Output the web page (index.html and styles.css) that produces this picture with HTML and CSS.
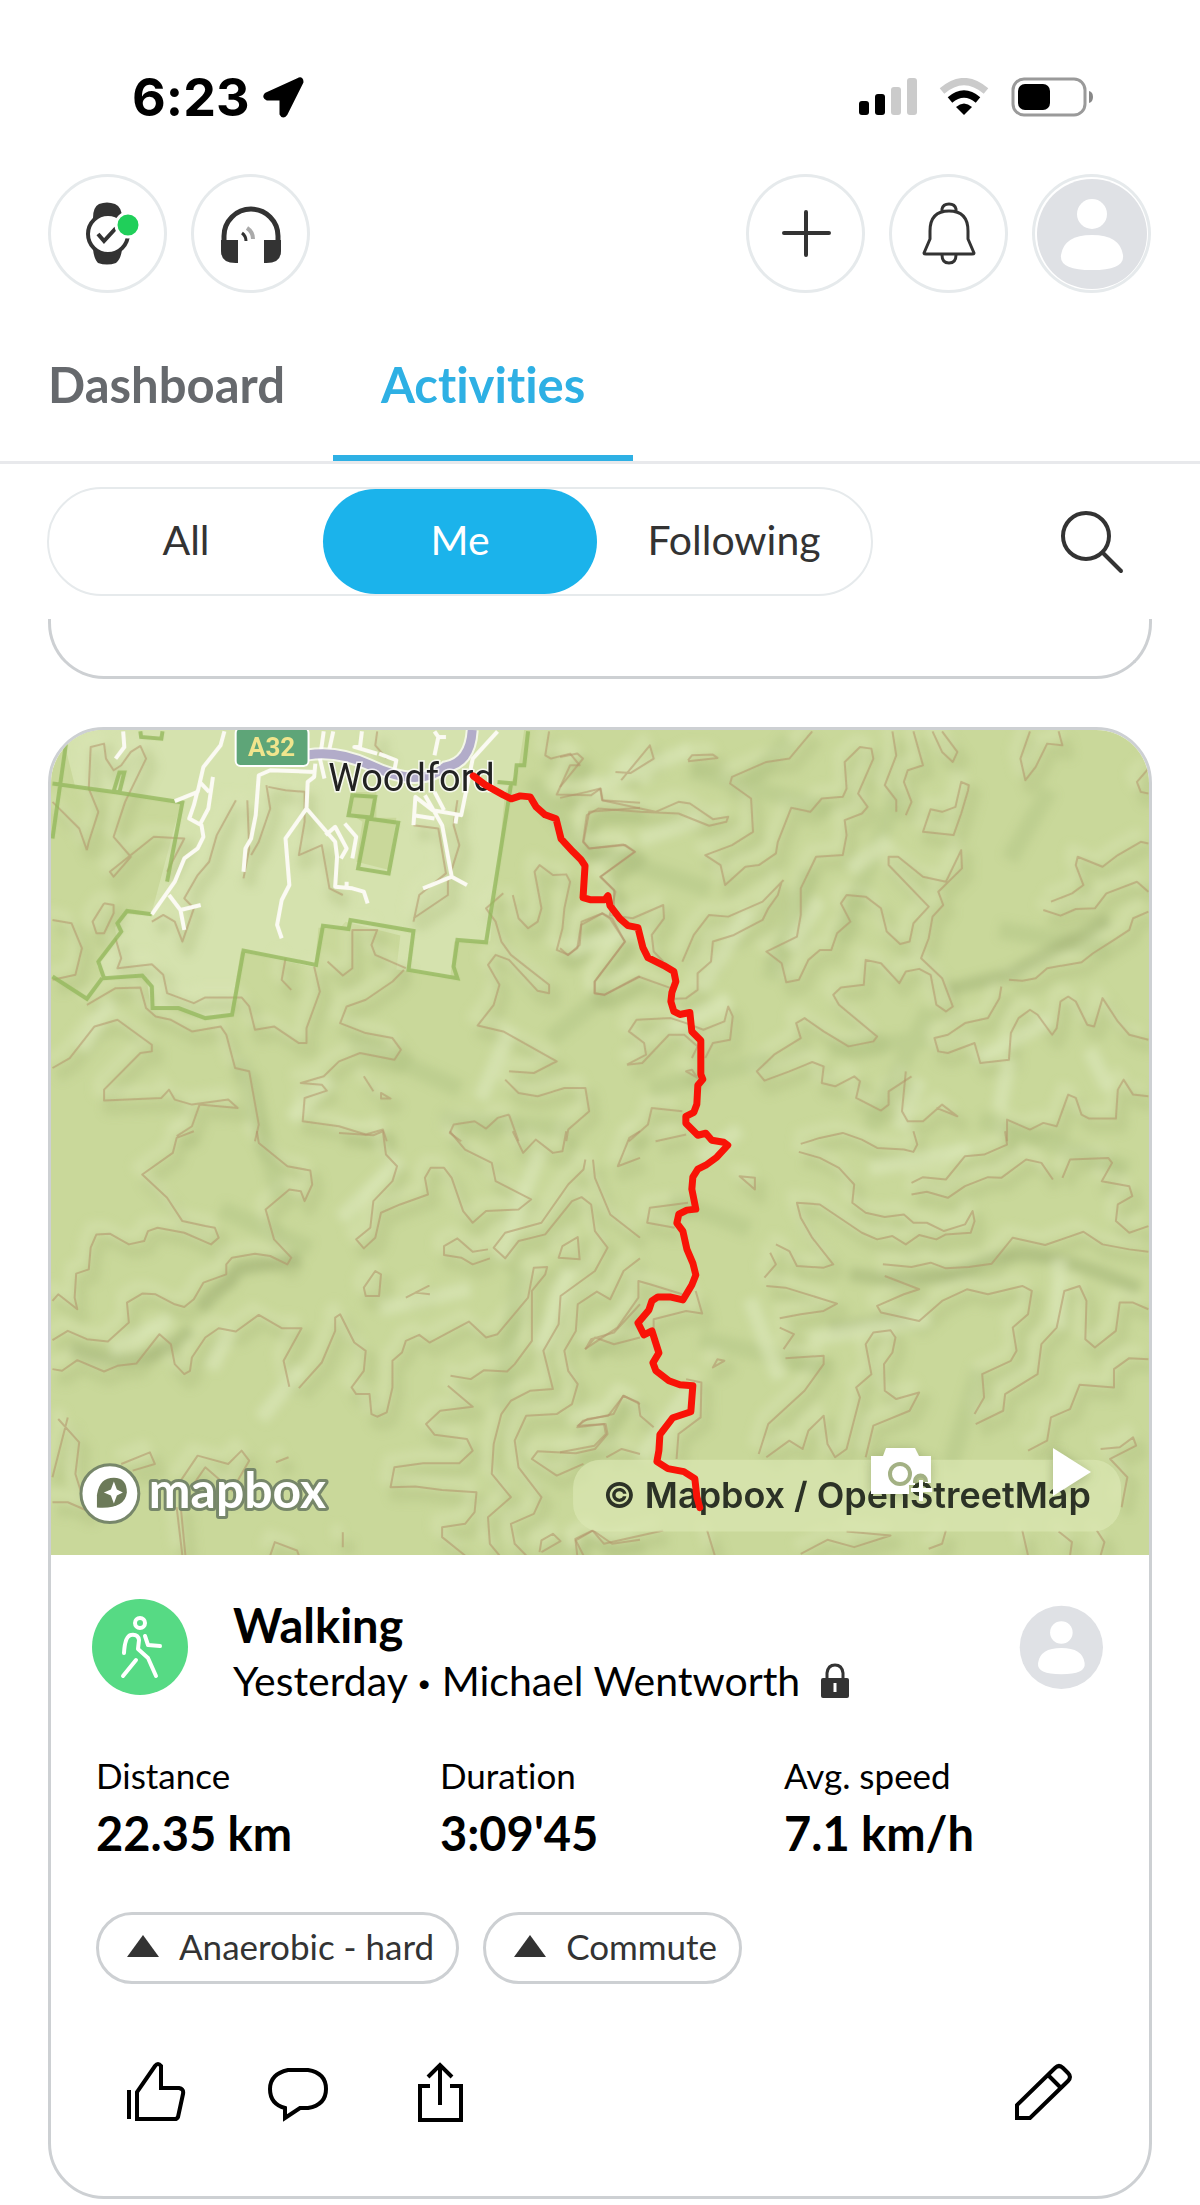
FILE: index.html
```html
<!DOCTYPE html>
<html lang="en">
<head>
  <meta charset="UTF-8">
  <meta name="viewport" content="width=device-width, initial-scale=1.0">
  <title>Activities</title>
  <link rel="stylesheet" href="styles.css">
</head>
<body>
  <div class="status-bar">
    <div class="status-time">
      <span>6:23</span>
      <svg width="44" height="44" viewBox="0 0 44 44"><path d="M38 4 5 19q-3 3 1 5h14v15q2 4 5 0L41 7q0-4-3-3z" stroke="#000" stroke-width="3" stroke-linejoin="round"/></svg>
    </div>
    <div class="status-icons">
      <svg width="58" height="38" viewBox="0 0 58 38">
        <rect x="0" y="23" width="10" height="14" rx="3"/><rect x="16" y="16" width="10" height="21" rx="3"/>
        <g fill="#cbcbcb"><rect x="32" y="9" width="10" height="28" rx="3"/><rect x="48" y="0" width="10" height="37" rx="3"/></g>
      </svg>
      <svg width="50" height="38" viewBox="0 0 50 38">
        <path d="M3 13q22-19 44 0" fill="none" stroke="#cbcbcb" stroke-width="7"/>
        <path d="M11 22q14-12 28 0" fill="none" stroke="#000" stroke-width="7"/>
        <path d="M17 29q8-7 16 0l-8 8z"/>
      </svg>
      <svg width="84" height="40" viewBox="0 0 84 40">
        <rect x="2" y="2" width="72" height="36" rx="11" fill="none" stroke="#9a9a9a" stroke-width="3"/>
        <rect x="7" y="7" width="32" height="26" rx="7"/><path d="M78 14q4 1 4 6t-4 6z" fill="#888"/>
      </svg>
    </div>
  </div>

  <header class="toolbar">
    <button class="round-btn" aria-label="Watch connected">
      <svg width="119" height="119" viewBox="0 0 119 119">
        <path d="M45 44q0-11 6-14 8-3 16 0 7 3 7 14l-4 10H49zM45 75q1 10 5 14 9 3 18 0 5-4 6-14l-4-10H49z" fill="#333"/>
        <circle cx="60" cy="60" r="20" fill="#fff" stroke="#333" stroke-width="4"/>
        <path d="m50 60 6 7 12-13" fill="none" stroke="#333" stroke-width="4"/>
        <circle cx="80" cy="51" r="12" fill="#20cf5a" stroke="#fff" stroke-width="3"/>
      </svg>
    </button>
    <button class="round-btn" aria-label="Headphones">
      <svg width="119" height="119" viewBox="0 0 119 119">
        <path d="M33 68V62a27 27 0 0 1 54 0v6" fill="none" stroke="#333" stroke-width="5"/>
        <path d="M30 66h17v23q-17 1-17-12zM73 66h17v11q0 13-17 12z" fill="#333"/>
        <path d="M51 59q4 3 4 8" fill="none" stroke="#333" stroke-width="3"/><path d="M56 54q6 4 6 11" fill="none" stroke="#aaa" stroke-width="4"/>
      </svg>
    </button>
    <span class="spacer"></span>
    <button class="round-btn" aria-label="Add">
      <svg width="119" height="119" viewBox="0 0 119 119"><path d="M60 38v43M38 59h45" stroke="#333" stroke-width="4" stroke-linecap="round"/></svg>
    </button>
    <button class="round-btn" aria-label="Notifications">
      <svg width="119" height="119" viewBox="0 0 119 119" fill="none" stroke="#333" stroke-width="3" stroke-linejoin="round">
        <path d="M53 38v-3q1-5 7-5t7 5v3M41 57q0-20 19-20t19 20v8l6 14q0 1-2 1H37q-2 0-2-1l6-14z"/><path d="M53 81q0 8 7 8t7-8"/>
      </svg>
    </button>
    <button class="round-btn" aria-label="Profile">
      <svg width="119" height="119" viewBox="0 0 119 119">
        <circle cx="60" cy="60" r="55" fill="#dfe1e5"/><circle cx="60" cy="40" r="15" fill="#fff"/>
        <path d="M29 81q3-20 31-20t31 20q2 15-31 15T29 81z" fill="#fff"/>
      </svg>
    </button>
  </header>

  <nav class="tabs">
    <a class="tab" href="#">Dashboard</a>
    <a class="tab tab-active" href="#">Activities</a>
  </nav>

  <div class="filters">
    <div class="segmented">
      <button class="segment">All</button>
      <button class="segment segment-active">Me</button>
      <button class="segment">Following</button>
    </div>
    <button class="icon-btn" aria-label="Search">
      <svg width="64" height="64" viewBox="0 0 64 64" fill="none" stroke="#333" stroke-width="4" stroke-linecap="round"><circle cx="26" cy="26" r="23"/><path d="m43 43 18 18"/></svg>
    </button>
  </div>

  <main class="feed">
    <div class="card-end"></div>

    <article class="card">
      <div class="map">
        <svg class="map-canvas" viewBox="0 0 1100 827" preserveAspectRatio="xMidYMid slice">
          <defs>
            <filter id="soft" x="-10%" y="-10%" width="120%" height="120%"><feGaussianBlur stdDeviation="4"/></filter>
            <g id="contours">
              <g transform="translate(-10 -8) scale(.3827 .3333)">
                <path d="M120 385 125 360 150 270 125 200 130 75 165 65 170 110 190 145 210 130 235 90 260 72 275 110 220 240 190 345 235 405 190 465 180 450 295 345 375 350 330 450M30 240 100 320 120 385"/>
                <path d="M510 235 460 340 440 420 410 460 375 530 400 560 370 660 350 600 320 580 290 600M165 545 190 550 190 575 165 635 145 635 135 600 165 545M30 595 80 605 107 680 90 760 30 775"/>
                <path d="M195 650 210 710 200 740 290 728 320 760 330 815 400 845 430 828 525 828 545 855 560 925 610 915 675 965 695 965 695 920 730 810 715 735"/>
                <path d="M120 850 195 800 260 798 275 860 300 885 340 895 395 930 470 915 485 940 508 1040 545 1050 570 1210 560 1260M30 1040 75 1010 140 915 200 895 290 970 290 990 260 995 165 1105 165 1138 315 1130 335 1105 350 1135 395 1150 490 1135 515 1160 415 1150 395 1215 355 1245"/>
                <path d="M540 235 545 380 530 470M590 190 600 260 570 360 550 400M595 195 640 205 690 210 690 300 675 400 735 370 755 500 790 520M950 745 920 780 850 835 800 855 783 905 850 935 920 950 942 985 925 1015 835 995 780 1020 740 1065 680 1085 735 1090 748 1108 690 1130 685 1200 780 1215 850 1240 895 1225 905 1260"/>
                <path d="M955 740 875 700 865 670 880 625 815 625 815 740 790 762 750 720M640 710 630 775 655 805M1090 235 1080 310 1095 370 1065 480 1065 520 975 590M975 600 990 520 1060 455 1040 320 975 310"/>
                <path d="M1330 28 1320 100 1335 110 1385 95 1410 130 1385 130 1350 218 1440 220 1465 200 1470 235 1568 243M1568 258 1435 270 1420 360 1435 380 1530 370 1555 390 1465 465 1500 505 1500 560M1235 520 1250 590 1275 620 1300 600 1310 560 1292 450 1305 430 1340 460 1375 458 1385 480 1370 560 1365 620 1350 685 1380 700 1410 670 1415 600 1470 575 1495 590 1528 660 1450 780 1450 815 1475 820 1568 765"/>
                <path d="M1210 515 1165 560 1190 600 1205 660 1230 700 1330 790 1330 815 1300 808 1225 715 1190 700 1170 730 1200 790 1185 850 1143 912 1210 930 1350 1020 1290 1055 1225 1050M1215 1075 1250 1115 1300 1125 1370 1100 1425 1100 1435 1170 1380 1225 1375 1260M1225 1180 1195 1190 1165 1222 1135 1200 1080 1210 1070 1235 1100 1260M1225 1180 1250 1260M880 28 875 70 905 110M845 1065 870 1110M890 1115 915 1132 890 1132z"/>
              </g>
              <g transform="translate(510 -8) scale(.3827 .3333)">
                <path d="M0 105 45 95 60 110 0 195M0 228 70 210 105 200 110 235 250 270 310 240 340 245 400 292 440 285 435 300 390 312 310 275 210 270 100 260 70 280 60 360 75 380 165 368 195 390 105 465 145 510 130 580 190 590 270 550 272 590 240 640 245 690 270 720"/>
                <path d="M145 150 185 153 245 110 235 70 160 175M335 115 345 100 400 98 412 108 335 118M660 28 600 110 540 120 450 165 445 185 500 230 505 330 450 370 380 400 420 430 432 490 485 435 520 430 565 395 570 360 605 258 655 270 685 230 740 225 750 200 745 120 785 75 815 80 820 110 780 215 805 255 790 275 745 295 750 340 740 400 670 405 630 500 630 580 620 645 540 690 580 725 592 782 625 775 650 715 680 685 710 685 725 635 760 600 735 545 750 520 800 525 840 560 855 630 890 667 915 660 925 605 965 555 860 430 860 405 885 405 950 465 1010 480 1050 385 1052 440 990 510 1003 550 975 585 965 650 945 710 1000 770 1028 855 1010 870 985 850 970 760 940 742 905 750 888 785 840 725 800 715 795 790 735 798 715 820 730 850 830 945 820 960 755 975 690 930 640 890 618 905 630 950 560 1000 515 1050 535 1078 600 1050 660 1022 690 1035 685 1085 720 1095 770 1065 785 1080 775 1130 840 1168 860 1150 860 1110 920 1065"/>
                <path d="M585 475 530 540 440 585 390 580 350 640 320 720M580 480 570 520 545 560 530 595 455 640 400 660 395 720 360 755 360 805 330 830 300 832M0 680 20 700 45 680 55 610 110 575 130 590 170 660 90 780 90 815 115 820 205 765 290 800M175 1030 215 1025 285 940 325 940 360 975 345 1010M175 1030 225 1000 220 965 180 930 200 895 290 890 330 905 375 925 430 900 440 855 452 885 445 955 400 965 380 1010M330 1050 345 1045 360 1070z"/>
                <path d="M870 28 880 100 850 190 880 235 880 270M925 28 950 130 910 145 900 180 920 240 905 280M975 28 1000 90 1028 120 1040 90 1000 28M1070 190 1050 180 1035 255 1000 270 970 262 950 330 1030 340 1050 275 1068 205zM1230 28 1205 110 1218 175 1245 135 1275 65 1315 70 1305 28M1540 140 1510 180 1520 210 1540 215M1285 540 1340 515 1370 490 1350 430 1355 405 1420 435 1460 400 1520 360 1540 365M1265 565 1310 582 1350 562 1400 560 1430 515 1510 480 1540 510M1175 775 1210 778 1245 770 1275 740 1365 722 1395 695 1450 655 1490 625 1500 590 1540 570M1155 795 1150 830 1120 890 1060 905 1015 940 980 950 990 990 1015 995 1085 965 1100 1025 1175 1015 1180 935 1200 890 1230 865 1250 880 1288 940 1300 920 1310 840 1330 825 1350 840 1380 910 1398 915 1420 830 1460 900 1490 940 1540 955M905 1050 895 1170 910 1200 950 1200 1000 1150 1040 1185 985 1160M1170 1260 1170 1195 1230 1225 1265 1205 1300 1215 1330 1120 1350 1130 1365 1180 1385 1192 1455 1192 1460 1105 1475 1075 1500 1120 1540 1125M180 1260 230 1210 240 1160 320 1170M250 1260 330 1240"/>
              </g>
              <g transform="translate(-10 402) scale(.3827 .3333)">
                <path d="M400 0 355 20 345 65 265 130 330 200 370 270 430 285 455 290 465 320 445 340 375 305 305 290 280 300 270 330 230 340 180 308 145 310 130 350 125 415 92 428 88 500 95 535 45 490 30 510M565 0 570 35 645 105 705 118 710 160 690 210 680 180 650 175 588 235 610 325 655 380 645 400 600 375 560 368 500 380 485 400 485 430 425 455 400 505 375 528 350 520 300 490 265 488 225 515 230 575 175 632 120 625 70 600 30 628M30 715 55 720 95 688 165 722 200 705 250 698 310 610 340 640 350 700 375 730 390 720 395 680 430 620 465 592 510 602 570 552 630 592 682 592 635 690 650 768M675 772 735 695 770 600 770 560 783 550 820 635 850 660 845 720 813 770 825 790 860 790 865 850 880 858 905 845 920 770 920 690 945 665 955 630 990 612 1017 635 1120 572 1165 620 1195 610 1275 500 1290 410 1325 408 1320 430 1285 480 1285 630 1240 700 1220 722 1160 718 1125 745 1072 735"/>
                <path d="M780 5 870 12 895 0 903 70 932 105 920 150 870 210 862 290 825 325 845 352 875 320 890 245 940 220 1013 190 1005 140 1020 110 1055 110 1075 140 1105 240 1130 275 1165 240 1250 235 1283 205 1190 150 1180 95 1110 55 1070 0M1235 0 1262 65 1295 25 1340 65 1365 60 1375 0M1425 85 1420 115 1380 160 1310 275 1215 305 1185 350 1215 382 1250 330 1320 310 1390 210 1415 198 1440 220 1450 300 1483 350 1450 420 1360 495 1355 580 1315 660 1340 775 1280 780 1230 810 1205 850 1185 940 1180 1030 1230 1100 1170 1160 1175 1240 1200 1275M1445 85 1450 140 1490 250 1568 320M1355 380 1365 345 1405 318 1410 385zM1568 382 1525 420 1490 505 1455 482 1405 520 1400 600 1370 660 1380 720 1405 760 1390 820 1350 850 1270 855 1240 930 1250 1010 1310 1100 1290 1150 1230 1180 1240 1240 1270 1275M1568 80 1510 105 1540 20 1568 0"/>
                <path d="M1065 765 1130 828 1045 840 1008 880 1030 912 1115 925 1130 960 1095 998 1000 998 925 1010 915 1070 980 1068 1050 1078 1140 1085 1135 1145 1110 1180 1050 1190 1050 1220 1110 1275M1170 355 1130 362 1090 322 1055 345 1055 372 1100 380 1130 400 1175 382M955 500 1015 465 980 485 1018 490M845 470 875 420 890 430 885 495 850 495zM1425 655 1450 620 1500 640 1568 620M1425 655 1440 625 1500 605 1568 520M1568 820 1525 795 1485 855 1430 865 1405 885 1478 880 1483 910 1450 955 1400 968 1300 962 1285 985 1350 1035 1420 1000M1480 980 1520 955 1568 970M1305 1265 1310 1230 1340 1210 1360 1232 1310 1265M1420 1275 1400 1230 1445 1200 1495 1240 1568 1228M45 865 100 935 90 1030 120 1140 70 1115 30 1115M70 860 30 1040M210 1000 285 965 298 1000 240 1020M360 1060 410 975 490 1000 525 960 545 990 500 1080 430 1010 400 1060M355 1130 370 1275M365 1120 378 1275M600 1275 612 1235 670 1260 675 1275M790 1205 790 1250M615 995 648 980"/>
              </g>
              <g transform="translate(510 402) scale(.3827 .3333)">
                <path d="M630 38 680 20 740 5 790 25 830 50 900 55 925 62 935 40 925 0M625 62 680 80 730 110 770 160 765 215 800 245 850 258 900 250 925 275 960 275 1005 300 1060 280 1080 240 1085 270 1075 305 1010 310 985 325 940 312 905 340 870 315 830 325 790 305 680 220 620 215 630 260 660 320 715 400 690 410 620 405 600 360 565 340M535 440 565 400 550 365M540 465 590 470 725 518 690 540 630 550 575 562M470 135 510 140 510 175zM850 435 940 475 900 490 830 525 840 545 940 570 1000 510 1065 475 1120 490 1210 465 1235 480 1225 550 1185 590 1195 660 1180 690 1105 730 1110 800 1085 850M845 400 920 408 970 395 1010 412 1070 408 1130 398 1185 320 1270 342 1370 302 1420 340 1490 355 1540 362M920 155 950 138 1010 145 1060 75 1110 70 1170 40 1165 0M920 190 960 182 1015 200 1060 165 1120 138 1155 140 1220 85 1260 95 1290 145M1315 140 1335 85 1435 80 1445 95 1418 150 1490 165 1498 195 1460 220 1455 270 1490 305 1540 285M1088 880 1160 840 1165 790 1250 730 1260 640 1300 590 1320 480 1360 465 1378 510 1375 625 1400 650 1455 600 1465 515 1500 515 1540 535M575 590 612 610 585 655M590 682 690 675 690 700 640 780 545 880 520 970M540 980 600 930 635 955 650 900 690 855 700 940 720 980 750 955 785 800 775 770 815 730 800 640 820 605 865 598 878 620 870 665 848 700 850 780 880 805 940 785 915 840 820 885 800 980M1540 685 1490 682 1450 715 1450 770 1360 762 1335 835 1285 860 1275 930 1225 960M1415 955 1465 950 1500 920 1508 945 1440 985 1485 1040 1470 1130"/>
                <path d="M335 215 235 230 228 275 300 290M355 480 372 548 330 540 245 565 245 600M320 490 235 460 205 450 205 500 150 590 65 655M330 745 370 755 368 860 310 910 305 985M245 890 210 855 205 815 165 795 140 850 60 870 45 890 115 880 120 910 90 945 0 965M400 710 412 685 430 690zM45 1275 40 1225 85 1200 115 1240 270 1200M385 1200 405 1275M630 1270 700 1228 770 1250 865 1215 750 1203M1010 1200 1000 1240 965 1255M1210 1200 1225 1275M1305 1203 1340 1235 1335 1275M1405 1200 1425 1235 1415 1275"/>
              </g>
            </g>
          </defs>
          <rect width="1100" height="827" fill="#c9d89a"/>
          <!-- town area -->
          <path d="M10 0H474L468 40 455 62 440 212 404 212 400 248 346 240 350 206 295 192 290 198 268 198 264 238 190 222 180 284 150 288 130 280 100 280 96 250 84 246 54 248 46 236 66 210 64 198 76 184 100 186 130 74 24 56z" fill="#d5e2ae"/>
          <path d="M304 62h22v26h20l-8 52-32-8 6-40-12-8z" fill="#c9d89a"/>
          <!-- hill shading -->
          <g filter="url(#soft)">
            <use href="#contours" x="5" y="8" fill="none" stroke="#a8bb79" stroke-opacity=".3" stroke-width="14"/>
            <use href="#contours" x="-6" y="-8" fill="none" stroke="#dbe7b7" stroke-opacity=".4" stroke-width="10"/>
            <path d="M480 50 540 130M560 260 500 310M640 40 780 80M700 50 740 10M760 140 720 250M850 60 790 210M600 360 720 330M880 280 820 400M300 310 410 360M170 480 260 520M390 390 520 400M470 540 450 680M650 610 780 640M930 390 1080 440M930 640 900 740M190 330 230 470M540 120 660 160M780 320 880 310M950 200 1060 220M1000 60 960 130M620 470 700 500" fill="none" stroke="#a7b979" stroke-opacity=".3" stroke-width="18"/>
            <path d="M800 545Q880 560 930 535T1090 560M20 620Q90 650 140 600M150 580 190 540 250 530M900 260 960 245 1060 190M780 600 860 590" fill="none" stroke="#95a86c" stroke-opacity=".4" stroke-width="14"/>
            <path d="M540 60 640 20M570 30 600 50M520 220 590 200M700 180 650 260M740 220 770 170M800 140 840 110M620 300 680 270M930 330 1000 290M460 300 430 370M290 490 350 430M60 620 120 590M160 640 180 600M250 640 210 690M490 420 450 530M640 660 590 730M760 610 880 590M1010 530 1010 600M820 440 920 420M330 580 420 560M700 570 730 650M850 400 870 350M960 330 950 380M1040 320 1060 360M240 390 280 350M520 540 490 620M590 110 650 90M30 320 60 270M690 400 650 430" fill="none" stroke="#dce8ba" stroke-opacity=".6" stroke-width="15"/>
          </g>
          <use href="#contours" fill="none" stroke="#b3926a" stroke-opacity=".55" stroke-width="2"/>
          <!-- reserve boundaries -->
          <g transform="translate(-10 -8) scale(.3827 .3333)" class="bounds">
            <path d="M70 28 30 350M30 185 200 212 370 242 330 480M218 152 205 212 190 208 205 152zM260 28 262 45 315 50 318 28M290 578 225 568 200 605 210 630 150 720 165 770 265 762 290 795 292 860 360 860 430 890 500 880 530 687 720 730 738 612 805 622 810 595 975 628 962 745 1090 770 1080 735 1090 655 1165 662 1230 190M1195 180 1240 185 1245 130 1265 130 1275 28M815 220 875 225 865 287 805 280zM855 290 935 303 910 455 830 440zM30 765 120 832 160 770"/>
          </g>
          <!-- streets -->
          <g transform="translate(-10 -8) scale(.3827 .3333)" class="streets">
            <path d="M215 28 218 75 195 110M480 28 470 70 425 135 410 210 350 238M410 205 400 250 388 290 420 310 425 345 410 380 375 410 350 480 290 578M335 520 365 565 375 625M365 565 418 550M450 165 438 260 415 310M440 210 415 180M718 150 600 145 570 160 562 280 550 350 535 380 530 450M718 125 715 165 698 180 695 260 640 350 650 490 630 535 618 610 630 650M695 260 770 360 775 405 770 495 815 500 845 510 855 545M745 340 770 315 800 380 785 410M795 305 825 345 815 410M800 480 800 500M740 28 730 110 742 170M765 28 755 80M840 28 835 75 820 75 880 95M885 95 930 115 925 145M1030 28 1040 45 1060 45M1040 45 1030 100M1195 28 1130 110 1100 280 1025 265 980 225 975 310M1005 220 1050 310 1075 465 1000 500M1075 465 1115 490M1085 305 1088 280M975 280 1030 290M1030 210 1055 265"/>
          </g>
          <path d="M257 25q30-5 62 10 50 24 76 2 25-4 27-37" fill="none" stroke="#fff" stroke-opacity=".7" stroke-width="13"/>
          <path d="M257 25q30-5 62 10 50 24 76 2 25-4 27-37" fill="none" stroke="#b2acc9" stroke-width="9"/>
          <rect x="185" y="-2" width="73" height="38" rx="5" fill="#5ea578" stroke="#fff" stroke-width="2"/>
          <text x="221" y="26" class="road-label">A32</text>
          <text x="361" y="61" class="place-label">Woodford</text>
          <!-- mapbox mark -->
          <circle cx="59" cy="765" r="29" fill="#fff" stroke="#77876a" stroke-width="3"/>
          <path d="M46 779v-12q2-18 17-18 13 0 13 15-2 17-30 15z" fill="#6c7a59"/><path d="m63 753 3 8 6 3-6 3-3 8-3-8-7-3 7-3z" fill="#fff"/>
          <text x="98" y="779" class="mapbox-label">mapbox</text>
          <rect x="523" y="731" width="549" height="72" rx="28" fill="#dbe8b4" fill-opacity=".65"/>
          <text x="553" y="779" class="credit-label">© Mapbox / OpenStreetMap</text>
          <path class="route" d="M423 46 435 55 444 60 453 65 461 69 470 66 480 67 486 77 495 85 506 89 511 109 523 122 531 130 535 136 533 168 540 170 555 170 558 166 560 176 570 189 578 196 588 198 593 218 598 228 614 236 624 242 626 252 622 263 621 272 624 282 630 285 640 283 642 302 651 311 651 345 653 350 648 356 647 375 644 383 636 387 636 394 648 406 656 404 662 411 674 413 678 416 667 428 656 436 648 440 643 448 642 460 646 480 637 481 629 485 627 494 633 502 637 520 643 534 646 546 642 556 633 571 620 568 608 568 602 572 599 581 588 594 594 606 602 602 609 624 603 634 606 642 619 652 630 656 643 657 641 683 623 689 610 706 609 722 607 733 618 740 634 743 645 750 647 768 650 779"/>
        </svg>
        <div class="map-actions">
          <button class="icon-btn" aria-label="Add photo">
            <svg width="64" height="60" viewBox="0 0 64 60">
              <path d="M1 9h12l3-8h29l4 8h12v27h-6v-2a5 5 0 0 0-10 0v4h-6v9H1z" fill="#fff"/>
              <circle cx="30" cy="27" r="10" fill="#fff" stroke="#a3b184" stroke-width="4"/>
              <path d="M45 36v-2a5 5 0 0 1 11 0v1" fill="none" stroke="#a3b184" stroke-width="4"/><path d="M51 33v21M41 43h21" stroke="#fff" stroke-width="4"/>
            </svg>
          </button>
          <button class="icon-btn" aria-label="Play route">
            <svg width="40" height="50" viewBox="0 0 40 50"><path d="M1 1 39 25 1 49z" fill="#fff"/></svg>
          </button>
        </div>
      </div>

      <div class="card-body">
        <div class="activity-head">
          <svg width="96" height="96" viewBox="0 0 96 96">
            <circle cx="48" cy="48" r="48" fill="#56da84"/>
            <g fill="none" stroke="#fff" stroke-width="4" stroke-linecap="round" stroke-linejoin="round">
              <circle cx="48" cy="24" r="5"/><path d="M32 54q1-17 7-18 7-1 8 5l-1 9 10 9 8 18M44 61 31 77M53 37l3 9 12 1"/>
            </g>
          </svg>
          <div class="activity-title">
            <h2>Walking</h2>
            <p><span>Yesterday <span class="dot">•</span> Michael Wentworth</span>
              <svg width="30" height="36" viewBox="0 0 30 36"><path d="M7 16V10q1-8 8-8t8 8v6" fill="none" stroke="#333" stroke-width="3"/><rect x="1" y="15" width="28" height="20" rx="2" fill="#333"/><path d="M15 20v9" stroke="#fff" stroke-width="3"/></svg>
            </p>
          </div>
          <svg class="owner" width="84" height="84" viewBox="0 0 119 119">
            <circle cx="60" cy="60" r="59" fill="#dfe1e5"/><circle cx="60" cy="39" r="16" fill="#fff"/>
            <path d="M27 82q3-21 33-21t33 21q2 16-33 16T27 82z" fill="#fff"/>
          </svg>
        </div>

        <dl class="stats">
          <div><dt>Distance</dt><dd>22.35 km</dd></div>
          <div><dt>Duration</dt><dd>3:09'45</dd></div>
          <div><dt>Avg. speed</dt><dd>7.1 km/h</dd></div>
        </dl>

        <div class="chips">
          <span class="chip"><svg width="32" height="22" viewBox="0 0 32 22"><path d="M16 0 32 22H0z" fill="#333"/></svg>Anaerobic - hard</span>
          <span class="chip"><svg width="32" height="22" viewBox="0 0 32 22"><path d="M16 0 32 22H0z" fill="#333"/></svg>Commute</span>
        </div>

        <div class="actions">
          <button class="icon-btn" aria-label="Like">
            <svg width="60" height="60" viewBox="0 0 60 60" class="line-icon"><path d="M3 28v29M11 57V30L29 4q3-4 6 0v22h18q5 1 4 6l-5 23q-1 2-3 2z"/></svg>
          </button>
          <button class="icon-btn" aria-label="Comment">
            <svg width="60" height="60" viewBox="0 0 60 60" class="line-icon"><path d="M20 8h20q18 3 18 19T40 46h-8L17 56V46Q2 42 2 27T20 8z"/></svg>
          </button>
          <button class="icon-btn" aria-label="Share">
            <svg width="60" height="60" viewBox="0 0 60 60" class="line-icon"><path d="M20 24H10v34h41V24H40M30 43V3M18 15 30 3l12 12"/></svg>
          </button>
          <span class="spacer"></span>
          <button class="icon-btn" aria-label="Edit">
            <svg width="60" height="60" viewBox="0 0 60 60" class="line-icon"><path d="M3 56V43L41 6q4-4 8 0l5 5q4 4 0 8L16 56zM34 13l13 13"/></svg>
          </button>
        </div>
      </div>
    </article>
  </main>
</body>
</html>
```

FILE: styles.css
```css
* {
  box-sizing: border-box;
}

body {
  margin: 0;
  background-color: #fff;
  color: #000;
  font-family: Lato, "Liberation Sans", sans-serif;
  font-variant-ligatures: none;
}

button {
  margin: 0;
  padding: 0;
  border: none;
  background: none;
  color: inherit;
  font: inherit;
  cursor: pointer;
}

svg {
  display: block;
}

.spacer {
  flex: 1;
}

.icon-btn {
  display: flex;
}

/* status bar */
.status-bar {
  display: flex;
  justify-content: space-between;
  align-items: center;
  height: 174px;
  padding: 20px 105px 0 132px;
}

.status-time {
  display: flex;
  align-items: center;
  gap: 12px;
  font-family: Inter, sans-serif;
  font-size: 52px;
  font-weight: 700;
}

.status-icons {
  display: flex;
  align-items: center;
  gap: 22px;
}

/* toolbar */
.toolbar {
  display: flex;
  gap: 24px;
  padding: 0 49px 0 48px;
}

.round-btn {
  width: 119px;
  height: 119px;
  border-radius: 50%;
  box-shadow: inset 0 0 0 3px #e6eaec;
}

/* tabs */
.tabs {
  display: flex;
  height: 171px;
  border-bottom: 3px solid #e8e9ec;
}

.tab {
  padding: 61px 48px 0;
  color: #66696d;
  font-size: 49px;
  font-weight: 700;
  line-height: 60px;
  text-decoration: none;
}

.tab-active {
  border-bottom: 6px solid #2eb0e4;
  color: #2eb0e4;
}

/* filters */
.filters {
  display: flex;
  justify-content: space-between;
  align-items: center;
  padding: 23px 76px 23px 47px;
}

.segmented {
  display: grid;
  grid-template-columns: repeat(3, 274px);
  height: 109px;
  border: 2px solid #e6eaec;
  border-radius: 55px;
}

.segment {
  padding-bottom: 4px;
  border-radius: 55px;
  color: #333;
  font-size: 41px;
}

.segment-active {
  background-color: #1bb3eb;
  color: #fff;
}

/* feed */
.feed {
  padding: 0 48px 5px;
}

.card-end {
  height: 60px;
  margin-bottom: 48px;
  border: 3px solid #cdd0d3;
  border-top: none;
  border-radius: 0 0 56px 56px;
}

.card {
  border: 3px solid #cdd0d3;
  border-radius: 56px;
  overflow: hidden;
}

.map {
  position: relative;
}

.map-canvas {
  width: 100%;
}

.bounds path {
  fill: none;
  stroke: #94b85c;
  stroke-width: 4px;
  stroke-opacity: 0.8;
  vector-effect: non-scaling-stroke;
}

.streets path {
  fill: none;
  stroke: #fbfaf3;
  stroke-width: 4px;
  stroke-linejoin: round;
  vector-effect: non-scaling-stroke;
}

#contours path {
  vector-effect: non-scaling-stroke;
  stroke-linejoin: round;
}

.road-label {
  fill: #f0e58d;
  font-family: Roboto, sans-serif;
  font-size: 26px;
  font-weight: 700;
  text-anchor: middle;
}

.place-label {
  fill: #222;
  stroke: #fff;
  stroke-width: 3px;
  stroke-opacity: 0.8;
  paint-order: stroke;
  font-family: Roboto, sans-serif;
  font-size: 38px;
  text-anchor: middle;
}

.mapbox-label {
  fill: #fff;
  stroke: #77876a;
  stroke-width: 6px;
  stroke-linejoin: round;
  paint-order: stroke;
  font-size: 50px;
  font-weight: 700;
}

.credit-label {
  fill: #2c3226;
  font-family: Inter, sans-serif;
  font-size: 36px;
  font-weight: 600;
}

.route {
  fill: none;
  stroke: #f91307;
  stroke-width: 7px;
  stroke-linecap: round;
  stroke-linejoin: round;
}

.map-actions {
  position: absolute;
  right: 57px;
  bottom: 48px;
  display: flex;
  gap: 118px;
  filter: drop-shadow(0 2px 6px rgba(60, 80, 30, 0.3));
}

.card-body {
  padding: 44px 46px 74px 45px;
}

.activity-head {
  display: flex;
  align-items: flex-start;
  margin-left: -4px;
}

.activity-title {
  flex: 1;
  padding-left: 45px;
}

.activity-title h2 {
  margin: 0;
  font-size: 47px;
  line-height: 52px;
}

.activity-title p {
  display: flex;
  align-items: center;
  gap: 20px;
  margin: 0;
  font-size: 41px;
  line-height: 60px;
}

.dot {
  font-size: 24px;
  line-height: 1;
  vertical-align: 4px;
}

.owner {
  margin-top: 6px;
}

.stats {
  display: grid;
  grid-template-columns: repeat(3, 344px);
  margin: 36px 0 49px;
}

.stats dt {
  font-size: 35px;
  line-height: 56px;
}

.stats dd {
  margin: 0;
  font-size: 47px;
  font-weight: 700;
  line-height: 60px;
}

.chips {
  display: flex;
  gap: 24px;
}

.chip {
  display: flex;
  align-items: center;
  gap: 20px;
  height: 72px;
  padding: 0 22px 4px 28px;
  border: 3px solid #cdd0d3;
  border-radius: 36px;
  color: #333;
  font-size: 35px;
}

.actions {
  display: flex;
  gap: 82px;
  padding: 78px 29px 0 30px;
}

.line-icon {
  fill: none;
  stroke: #000;
  stroke-width: 4px;
}
```
